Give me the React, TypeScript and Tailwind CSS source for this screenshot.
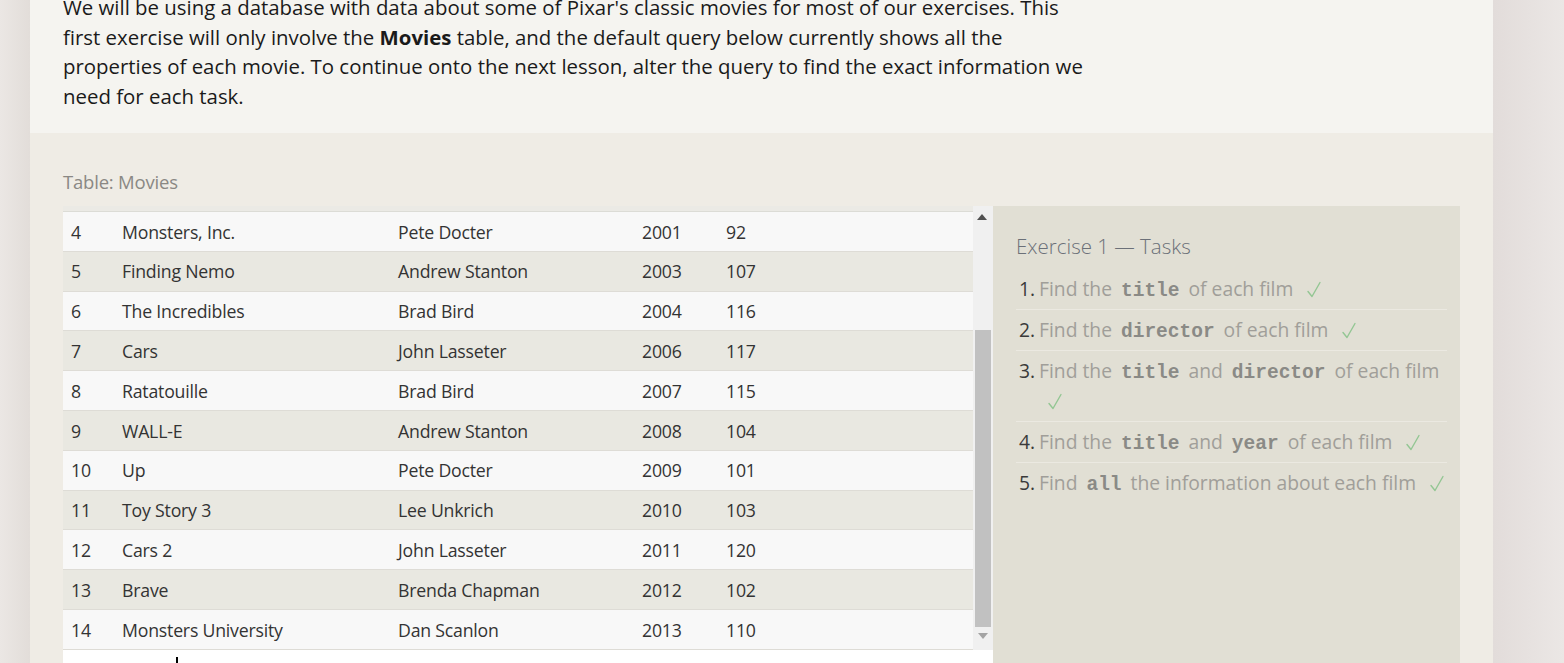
import React from "react";

const rows: [number, string, string, number, number][] = [
  [4, "Monsters, Inc.", "Pete Docter", 2001, 92],
  [5, "Finding Nemo", "Andrew Stanton", 2003, 107],
  [6, "The Incredibles", "Brad Bird", 2004, 116],
  [7, "Cars", "John Lasseter", 2006, 117],
  [8, "Ratatouille", "Brad Bird", 2007, 115],
  [9, "WALL-E", "Andrew Stanton", 2008, 104],
  [10, "Up", "Pete Docter", 2009, 101],
  [11, "Toy Story 3", "Lee Unkrich", 2010, 103],
  [12, "Cars 2", "John Lasseter", 2011, 120],
  [13, "Brave", "Brenda Chapman", 2012, 102],
  [14, "Monsters University", "Dan Scanlon", 2013, 110],
];

const Code = ({ children }: { children: React.ReactNode }) => (
  <code className="px-[9px] font-['Liberation_Mono',monospace] text-[19.5px] font-bold leading-none text-[#8a8a86]">
    {children}
  </code>
);

const CheckIcon = () => (
  <svg width="14" height="17" viewBox="0 0 14 17" className="inline-block align-[-2px]">
    <path d="M1 10.5 L5 15.5 L13 1.5" fill="none" stroke="#93c693" strokeWidth="1.4" strokeLinecap="round" strokeLinejoin="round" />
  </svg>
);

const Check = () => (
  <span className="ml-[14px]">
    <CheckIcon />
  </span>
);

export default function App() {
  return (
    <div className="flex h-[663px] w-[1564px] overflow-hidden bg-[#e9e5e2] font-['Open_Sans',sans-serif]">
      <div className="w-[30px] shrink-0 bg-gradient-to-r from-[#ebe7e4] to-[#e2ddd9]" />
      <div className="flex w-[1463px] shrink-0 flex-col">
        <div className="h-[133px] shrink-0 bg-[#f5f4f0] pl-[33px] pt-0">
          <p className="-mt-[7px] text-[20.4px] leading-[29.7px] text-[#1a1a1a]">
            We will be using a database with data about some of Pixar's classic movies for most of our exercises. This
            <br />
            first exercise will only involve the <b>Movies</b> table, and the default query below currently shows all the
            <br />
            properties of each movie. To continue onto the next lesson, alter the query to find the exact information we
            <br />
            need for each task.
          </p>
        </div>
        <div className="flex-1 bg-[#efece5] pl-[33px] pr-[33px]">
          <div className="pt-[37px] text-[18.5px] leading-[24px] tracking-[-0.2px] text-[#8a8884]">Table: Movies</div>
          <div className="mt-[12px] flex">
            <div className="flex w-[930px] flex-col">
              <div className="flex">
                <div className="w-[910px]">
                  <div className="h-[5px] bg-[#ebeae5]" />
                  <div className="h-[1px] bg-[#dcdcd6]" />
                  {rows.map((r, i) => (
                    <div
                      key={r[0]}
                      className={`flex h-[39.8px] items-center border-b border-[#dedcd6] pt-[1px] text-[17.7px] tracking-[-0.2px] text-[#333] ${
                        i % 2 === 0 ? "bg-[#f8f8f8]" : "bg-[#e9e8e1]"
                      }`}
                    >
                      <div className="w-[59px] pl-[8px]">{r[0]}</div>
                      <div className="w-[276px]">{r[1]}</div>
                      <div className="w-[244px]">{r[2]}</div>
                      <div className="w-[84px]">{r[3]}</div>
                      <div>{r[4]}</div>
                    </div>
                  ))}
                </div>
                <div className="relative w-[20px] bg-[#f0f0f0]">
                  <div className="absolute left-[4px] top-[8px] h-0 w-0 border-x-[5px] border-b-[6px] border-x-transparent border-b-[#505050]" />
                  <div className="absolute left-[2px] top-[124px] h-[297px] w-[16px] bg-[#c1c1c1]" />
                  <div className="absolute left-[5px] top-[427px] h-0 w-0 border-x-[5px] border-t-[6px] border-x-transparent border-t-[#a3a3a3]" />
                </div>
              </div>
              <div className="relative h-[20px] bg-white">
                <div className="absolute left-[113px] top-[7px] h-[6px] w-[2px] bg-black" />
              </div>
            </div>
            <div className="w-[467px] bg-[#e1dfd4] pl-[23px] pr-[13px] pt-[26px]">
              <div className="text-[20.5px] font-light leading-[28px] text-[#6b7078]">Exercise 1 — Tasks</div>
              <ol className="mt-[14px] text-[19.3px] text-[#a09e99]">
                {[
                  <>Find the<Code>title</Code>of each film<Check /></>,
                  <>Find the<Code>director</Code>of each film<Check /></>,
                  <>
                    Find the<Code>title</Code>and<Code>director</Code>of each film
                    <br />
                    <span className="ml-[9px]">
                      <CheckIcon />
                    </span>
                  </>,
                  <>Find the<Code>title</Code>and<Code>year</Code>of each film<Check /></>,
                  <>Find<Code>all</Code>the information about each film<Check /></>,
                ].map((c, i) => (
                  <li
                    key={i}
                    className={`flex leading-[30px] ${i < 4 ? "border-b border-[#ebe9e1]" : ""} ${
                      i === 0 ? "pb-[5px]" : "py-[5px]"
                    }`}
                  >
                    <span className="w-[23px] shrink-0 pl-[3px] text-[#3a3a3a]">{i + 1}.</span>
                    <span>{c}</span>
                  </li>
                ))}
              </ol>
            </div>
          </div>
        </div>
      </div>
      <div className="flex-1 bg-gradient-to-r from-[#e2dcda] to-[#ebe7e5]" />
    </div>
  );
}
